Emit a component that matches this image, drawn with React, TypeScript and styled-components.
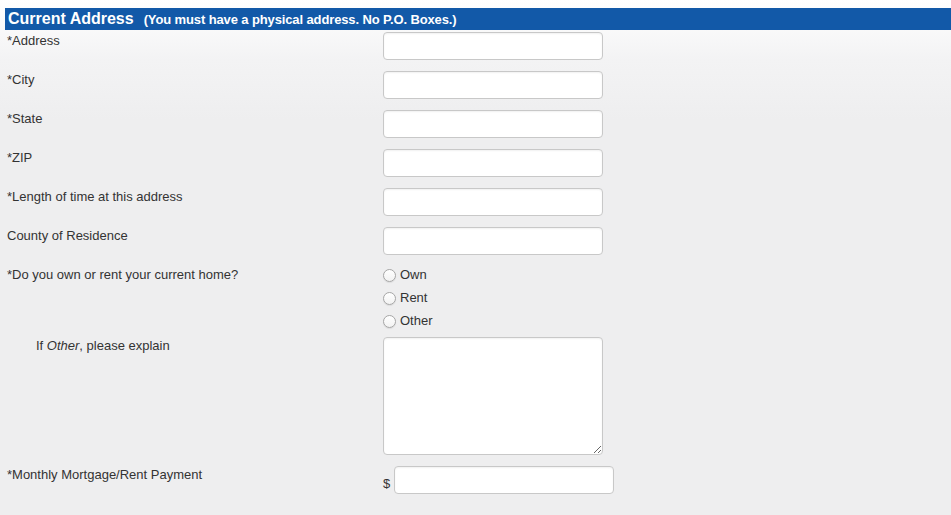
import React from "react";
import styled, { createGlobalStyle } from "styled-components";

const GlobalStyle = createGlobalStyle`
  html, body {
    margin: 0;
    padding: 0;
  }
  body {
    font-family: "Liberation Sans", Arial, Helvetica, sans-serif;
    font-size: 13px;
    color: #333;
    background: linear-gradient(to bottom, #ffffff 0px, #f3f3f4 60px, #eeeeef 120px, #eeeeef 100%);
    min-height: 515px;
  }
`;

const Page = styled.div`
  padding: 8px 0 0 5px;
`;

const SectionHeader = styled.div`
  display: flex;
  align-items: baseline;
  gap: 10px;
  background: #1259a8;
  color: #fff;
  height: 22px;
  padding-left: 3px;
  font-weight: bold;
  line-height: 22px;
`;

const HeaderTitle = styled.span`
  font-size: 16px;
`;

const HeaderNote = styled.span`
  font-size: 13px;
  letter-spacing: -0.12px;
`;

const Form = styled.div`
  padding: 2px 0 0 2px;
`;

const Row = styled.div<{ $gap?: number }>`
  display: grid;
  grid-template-columns: 376px 1fr;
  margin-bottom: ${(p) => p.$gap ?? 11}px;
`;

const Label = styled.div<{ $indent?: boolean; $top?: number }>`
  line-height: 16px;
  padding-top: ${(p) => p.$top ?? 1}px;
  padding-left: ${(p) => (p.$indent ? 29 : 0)}px;
`;

const TextInput = styled.input`
  box-sizing: border-box;
  width: 220px;
  height: 28px;
  border: 1px solid #c8c8c8;
  border-radius: 4px;
  background: #fff;
  box-shadow: inset 0 1px 2px rgba(0, 0, 0, 0.06);
  font: inherit;
  padding: 4px 6px;
  margin: 0;
`;

const TextArea = styled.textarea`
  box-sizing: border-box;
  display: block;
  width: 220px;
  height: 118px;
  border: 1px solid #c8c8c8;
  border-radius: 4px;
  background: #fff;
  box-shadow: inset 0 1px 2px rgba(0, 0, 0, 0.06);
  font: inherit;
  padding: 4px 6px;
  margin: 0;
`;

const RadioList = styled.div`
  display: flex;
  flex-direction: column;
`;

const RadioOption = styled.label`
  display: flex;
  align-items: center;
  height: 23px;
  gap: 4px;
`;

const Radio = styled.input`
  appearance: none;
  width: 13px;
  height: 13px;
  margin: 2px 0 0 0;
  border: 1px solid #a6a6a6;
  border-radius: 50%;
  background: linear-gradient(to bottom, #ffffff, #f2f2f2);
  box-shadow: 0 1px 1px rgba(0, 0, 0, 0.08);
`;

const MoneyField = styled.div`
  display: flex;
  align-items: center;
  gap: 4px;
`;

const Currency = styled.span`
  font-size: 13px;
  padding-top: 6px;
`;

const textFields = [
  "*Address",
  "*City",
  "*State",
  "*ZIP",
  "*Length of time at this address",
  "County of Residence",
];

const options = ["Own", "Rent", "Other"];

export default function App() {
  return (
    <>
      <GlobalStyle />
      <Page>
        <SectionHeader>
          <HeaderTitle>Current Address</HeaderTitle>
          <HeaderNote>(You must have a physical address. No P.O. Boxes.)</HeaderNote>
        </SectionHeader>
        <Form>
          {textFields.map((label, i) => (
            <Row key={label} $gap={i === textFields.length - 1 ? 8 : 11}>
              <Label>{label}</Label>
              <div>
                <TextInput type="text" />
              </div>
            </Row>
          ))}
          <Row $gap={5}>
            <Label $top={4}>*Do you own or rent your current home?</Label>
            <RadioList>
              {options.map((o) => (
                <RadioOption key={o}>
                  <Radio type="radio" name="own" />
                  {o}
                </RadioOption>
              ))}
            </RadioList>
          </Row>
          <Row>
            <Label $indent>
              If <em>Other</em>, please explain
            </Label>
            <div>
              <TextArea />
            </div>
          </Row>
          <Row>
            <Label>*Monthly Mortgage/Rent Payment</Label>
            <MoneyField>
              <Currency>$</Currency>
              <TextInput type="text" />
            </MoneyField>
          </Row>
        </Form>
      </Page>
    </>
  );
}
